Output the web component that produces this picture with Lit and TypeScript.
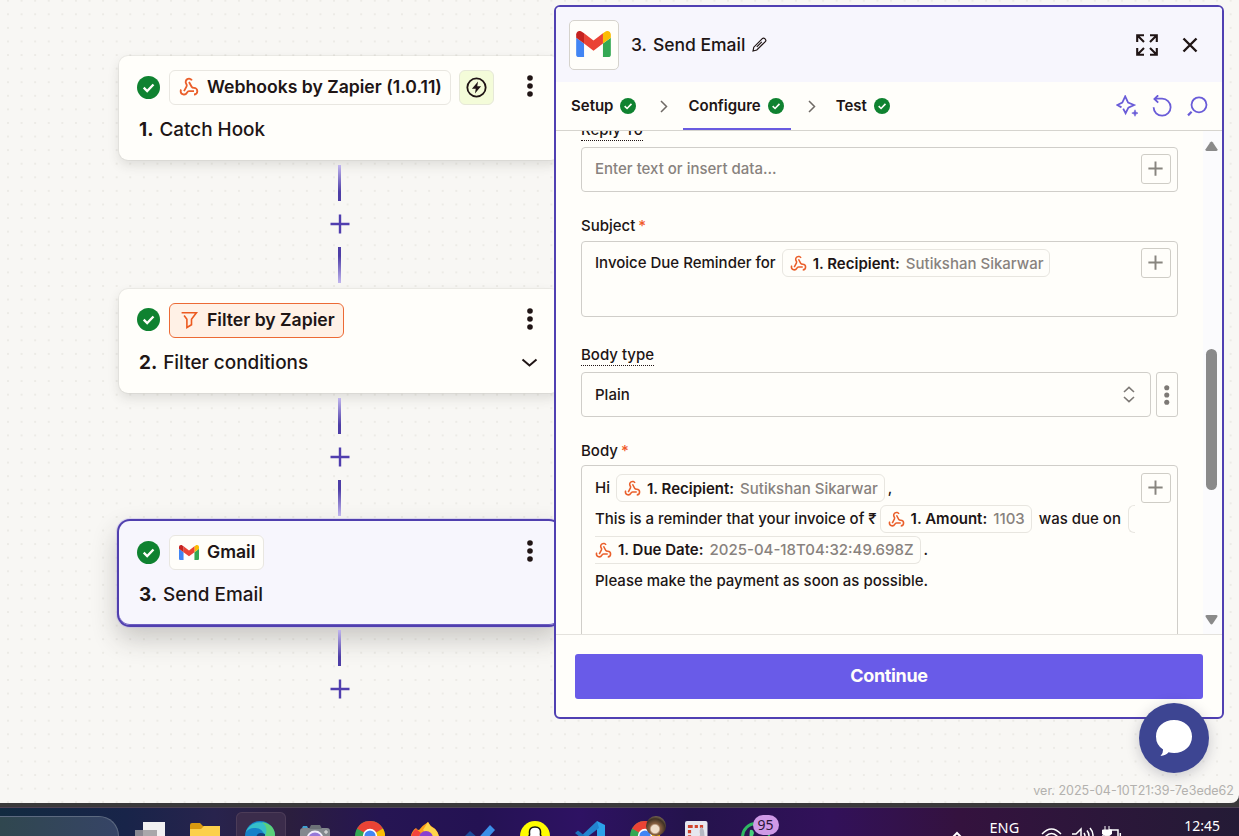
import { LitElement, html, css, svg } from "lit";
import { customElement, property } from "lit/decorators.js";

const hook = html`<svg class="hookicon" viewBox="0 0 24 24" fill="none" stroke="#ea5f2b" stroke-width="2.2" stroke-linecap="butt">
  <path d="M18 17h-6c-1.1 0-1.95.94-2.48 1.9A4 4 0 0 1 2 17c.01-.7.2-1.4.57-2" />
  <path d="m6 17 3.13-5.78c.53-.97.1-2.18-.5-3.1a4 4 0 1 1 6.89-4.06" />
  <path d="m12 6 3.13 5.73C15.66 12.7 16.9 13 18 13a4 4 0 0 1 0 8" />
</svg>`;

const gmail = html`<svg class="gmail" viewBox="52 42 88 66">
  <path fill="#4285f4" d="M58 108h14V74L52 59v43c0 3.32 2.69 6 6 6" />
  <path fill="#34a853" d="M120 108h14c3.32 0 6-2.69 6-6V59l-20 15" />
  <path fill="#fbbc04" d="M120 48v26l20-15v-8c0-7.42-8.47-11.65-14.4-7.2" />
  <path fill="#ea4335" d="M72 74V48l24 18 24-18v26L96 92" />
  <path fill="#c5221f" d="M52 51v8l20 15V48l-5.6-4.2c-5.94-4.45-14.4-.22-14.4 7.2" />
</svg>`;

const funnel = html`<svg class="funnel" viewBox="0 0 20 20" fill="none" stroke="#ec5a20" stroke-width="1.6">
  <path d="M2.600 2.800h14.800l-4.900 6.400v5.600l-4.600 2.700V9.200L5.100 5.600" />
</svg>`;

const check = html`<svg class="check" viewBox="0 0 24 24">
  <circle cx="12" cy="12" r="12" fill="#0f8230" />
  <path d="m7 12.2 3.6 3.5 6.6-6.9" fill="none" stroke="#fffefa" stroke-width="2.4" />
</svg>`;

const dots = html`<svg class="dots" viewBox="0 0 6 22">
  <circle cx="3" cy="3" r="2.8" /><circle cx="3" cy="11" r="2.8" /><circle cx="3" cy="19" r="2.8" />
</svg>`;

const plus = html`<svg class="plus" viewBox="0 0 20 20"><path d="M10 .5v19M.5 10h19" fill="none" stroke="currentColor" /></svg>`;

@customElement("step-card")
class StepCard extends LitElement {
  @property() kind = "";
  @property() app = "";
  @property() number = "";
  @property() name = "";

  static styles = css`
    :host { display: block; height: 104px; }
    .card {
      box-sizing: border-box; height: 104px; border-radius: 9px; padding: 14px 20px 0 18px;
      background: #fffefa; color: #201515;
      box-shadow: 0 0 0 1px rgba(60, 50, 40, 0.05), 0 5px 12px rgba(50, 45, 40, 0.13);
    }
    .card.email {
      background: #f7f6fd;
      box-shadow: 0 0 0 2px #503fae, 0 0 0 3px #b9b0ec66, inset 0 -1px 0 #6b5cc0, 0 12px 26px 2px rgba(50, 45, 40, 0.24);
      border-radius: 11px;
    }
    .head, .foot { display: flex; align-items: center; }
    .head { height: 35px; }
    .check { width: 23px; height: 23px; margin: -1px 9px 0 0; }
    .chip {
      box-sizing: border-box; display: flex; align-items: center; gap: 8px; height: 35px;
      padding: 0 8px 1px 9px; border: 1px solid #e9e7e1; border-radius: 6px; background: #fffefa;
      font: 600 17.6px/24px Inter, sans-serif; white-space: nowrap;
    }
    .filter .chip { background: #fff1e6; border-color: #ec6a35; }
    .hookicon, .funnel { width: 20px; height: 20px; }
    .gmail { width: 20px; height: 15px; }
    .instant {
      box-sizing: border-box; width: 35px; height: 35px; margin-left: 8px; display: grid; place-items: center;
      border-radius: 6px; border: 1px solid #e6e8d8; background: #f4fcd9;
    }
    .instant svg { width: 21px; height: 21px; }
    .dots { width: 6px; height: 22px; margin: -3px 7px 0 auto; fill: #201515; }
    .foot { margin: 12px 0 0 2px; height: 26px; font: 500 18.9px/26px Inter, sans-serif; }
    .foot b { font-weight: 700; margin-right: 6px; }
    .chev { width: 17px; height: 10px; margin-left: auto; margin-right: 2px; }
  `;

  render() {
    const icon = this.kind === "hook" ? hook : this.kind === "filter" ? funnel : gmail;
    return html`<div class="card ${this.kind}">
      <div class="head">
        ${check}
        <div class="chip">${icon}<span>${this.app}</span></div>
        ${this.kind === "hook"
          ? html`<div class="instant"><svg viewBox="0 0 22 22"><circle cx="11" cy="11" r="9.6" fill="none" stroke="#201515" stroke-width="1.9" /><path d="M12.600 4.600 6.200 12.200h4l-.8 5.200 6.400-7.600h-4z" fill="#201515" /></svg></div>`
          : ""}
        ${dots}
      </div>
      <div class="foot">
        <b>${this.number}</b><span>${this.name}</span>
        ${this.kind === "filter"
          ? html`<svg class="chev" viewBox="0 0 17 10"><path d="m1.500 1.500 7 6 7-6" fill="none" stroke="#201515" stroke-width="2" /></svg>`
          : ""}
      </div>
    </div>`;
  }
}

@customElement("data-pill")
class DataPill extends LitElement {
  @property() label = "";
  @property() value = "";
  @property({ type: Boolean, reflect: true }) wrapped = false;

  static styles = css`
    :host {
      box-sizing: border-box; display: inline-flex; align-items: center; height: 28px;
      padding: 1px 6px 0 7px; border: 1px solid #e8e6e0; border-radius: 6px;
      font: 500 15px/20px Inter, sans-serif; color: #88827e; white-space: nowrap;
    }
    :host([wrapped]) { border-left: 0; border-radius: 0 6px 6px 0; padding-left: 0; }
    .hookicon { width: 17px; height: 17px; margin-right: 6px; }
    b { font-weight: 600; color: #201515; margin-right: 6px; }
  `;

  render() {
    return html`${hook}<b>${this.label}</b><span>${this.value}</span>`;
  }
}

@customElement("editor-panel")
class EditorPanel extends LitElement {
  static styles = css`
    :host {
      box-sizing: border-box; display: flex; flex-direction: column; border: 2px solid #5040b2; border-radius: 6px;
      background: #fffefa; overflow: hidden; color: #201515; font: 500 15px/20px Inter, sans-serif;
    }
    header { height: 75px; flex: none; display: flex; align-items: center; background: #f7f6fd; padding: 0 24px 0 13px; }
    .logo {
      box-sizing: border-box; width: 50px; height: 50px; border: 1px solid #d6d3cd; border-radius: 5px;
      display: grid; place-items: center; background: #fffefa; margin-right: 12px;
    }
    .logo .gmail { width: 35px; height: 26px; margin: -2px 1px 0 0; }
    .title { font-size: 17.5px; line-height: 24px; white-space: pre; }
    .num { margin-right: 6px; }
    .pencil { width: 15px; height: 15px; margin-left: 7px; }
    .expand { width: 22px; height: 22px; margin-left: auto; margin-right: 24px; }
    .close { width: 16px; height: 16px; }
    nav { flex: none; height: 48px; display: flex; align-items: center; border-bottom: 1px solid #d6d4ce; padding-left: 10px; }
    .tab {
      box-sizing: border-box; height: 48px; display: flex; align-items: center; gap: 7px; padding: 2px 7px 0 5px;
      font-weight: 600; border-bottom: 2px solid transparent;
    }
    .tab.on { border-bottom-color: #695be0; }
    .tab .check { width: 16px; height: 16px; }
    .sep { box-sizing: border-box; width: 40px; padding-left: 2px; display: grid; place-items: center; }
    .sep svg { width: 8px; height: 13px; }
    .tools { margin-left: auto; display: flex; align-items: center; gap: 13px; padding-right: 14px; color: #6a5cd8; }
    .tools svg { width: 22px; height: 22px; }
    .scroll { flex: none; height: 503px; overflow: hidden; display: flex; justify-content: space-between; padding-left: 25px; }
    .form { width: 597px; margin-top: -11px; }
    .label { display: block; height: 20px; white-space: pre; }
    .label.hint { width: max-content; border-bottom: 1px dotted #201515; }
    .label i { font-style: normal; color: #f05a2a; margin-left: 3px; }
    .box {
      box-sizing: border-box; border: 1px solid #d0cec9; border-radius: 4px; display: flex;
      justify-content: space-between; padding: 6px 6px 0 13px;
    }
    .reply { height: 45px; margin: 6px 0 24px; }
    .subject { height: 76px; margin: 5px 0 28px; }
    .body { height: 200px; margin-top: 4px; padding-top: 7px; }
    .ph { color: #88827e; line-height: 30px; }
    .add {
      box-sizing: border-box; width: 30px; height: 30px; flex: none; border: 1px solid #cfcdc6; border-radius: 3px;
      display: grid; place-items: center; color: #88857f;
    }
    .add .plus { width: 15px; height: 15px; stroke-width: 2.6; margin: 0 1px 1px 0; }
    .row { display: flex; align-items: center; white-space: pre; height: 31px; }
    .subject .row { height: 30px; }
    .body .row:first-child { height: 30px; }
    .row data-pill { margin: 0 7px 0 6px; }
    .row .tight { margin-left: 3px; }
    .row .first { margin-left: 0; }
    .comma { margin-left: -4px; }
    .stub { box-sizing: border-box; width: 7px; height: 28px; border: 1px solid #e8e6e0; border-right: 0; border-radius: 6px 0 0 6px; margin-left: 7px; }
    .pick { display: flex; gap: 5px; margin: 6px 0 24px; }
    .select { width: 570px; height: 45px; padding: 0 15px 0 13px; align-items: center; }
    .select svg { width: 12px; height: 17px; }
    .more { box-sizing: border-box; width: 22px; height: 45px; border: 1px solid #d0cec9; border-radius: 3px; display: grid; place-items: center; }
    .more .dots { width: 5.500px; height: 20px; fill: #7d7975; }
    .bar {
      width: 18px; background: #fbfbfd; display: flex; flex-direction: column; align-items: center; padding: 10px 1px 8px 0; box-sizing: border-box; margin-right: 1px;
    }
    .bar svg { width: 13px; height: 11px; fill: #8a8a8a; }
    .thumb { width: 11px; height: 141px; border-radius: 6px; background: #8a8a8a; margin: 197px 0 124px; flex: none; }
    footer { flex: 1; border-top: 1px solid #e4e2dd; padding: 19px 19px 0; }
    .go {
      height: 45px; width: 100%; border: 0; border-radius: 3px; background: #695be8; color: #fffefa;
      font: 700 18px/24px Inter, sans-serif; letter-spacing: -0.35px; padding: 0 0 2px; display: block;
    }
  `;

  render() {
    const sep = html`<span class="sep"><svg viewBox="0 0 8 13"><path d="m1 1 5.500 5.500L1 12" fill="none" stroke="#6f6a66" stroke-width="1.5" /></svg></span>`;
    const add = html`<span class="add">${plus}</span>`;
    return html`
      <header>
        <span class="logo">${gmail}</span>
        <span class="title"><span class="num">3.</span>Send Email</span>
        <svg class="pencil" viewBox="0 0 15 15" fill="none" stroke="#201515" stroke-width="1.2">
          <path d="M1 14l.8-3.800L10.300 1.700c.7-.7 1.700-.8 2.500 0l.4.400c.8.800.8 1.800.1 2.500L4.800 13zM4.800 9.800l5-5" />
        </svg>
        <svg class="expand" viewBox="0 0 22 22" fill="none" stroke="#201515" stroke-width="2.1">
          <path d="M1.200 8V1.200H8M1.500 1.500 8 8M14 1.200h6.800V8M20.500 1.500 14 8M1.200 14v6.800H8M1.500 20.500 8 14M14 20.800h6.800V14M20.500 20.500 14 14" />
        </svg>
        <svg class="close" viewBox="0 0 16 16"><path d="m1.500 1.500 13 13m0-13-13 13" fill="none" stroke="#201515" stroke-width="2.4" /></svg>
      </header>
      <nav>
        <span class="tab">Setup${check}</span>${sep}
        <span class="tab on">Configure${check}</span>${sep}
        <span class="tab">Test${check}</span>
        <span class="tools">
          <svg viewBox="0 0 22 22" fill="none" stroke="currentColor" stroke-width="1.8">
            <path d="M5.500 12.400 1.300 10l5-2.400L9.200 1.400l2.900 6.200L18 10l-5.600 2.600-2.800 5.600-2.400-4.600" />
            <path d="M19 14.800l.9 2.400 2.100.9-2.100.9-.9 2.300-.9-2.300-2.300-.9 2.300-.9z" fill="currentColor" stroke-width=".6" />
          </svg>
          <svg viewBox="0 0 22 22" fill="none" stroke="currentColor" stroke-width="1.8">
            <path d="M2.600 12.300a8.500 8.500 0 1 0 8.400-8.600H3.400M7.200.3 3.400 3.900l3.800 3.700" />
          </svg>
          <svg viewBox="0 0 22 22" fill="none" stroke="currentColor" stroke-width="1.8">
            <circle cx="13" cy="9.800" r="7.500" /><path d="M5.600 16.800 2 20.400" stroke-width="2.2" />
          </svg>
        </span>
      </nav>
      <div class="scroll">
        <div class="form">
          <span class="label hint">Reply To</span>
          <div class="box reply"><span class="ph">Enter text or insert data...</span>${add}</div>
          <span class="label">Subject<i>*</i></span>
          <div class="box subject">
            <div class="row">Invoice Due Reminder for<data-pill label="1. Recipient:" value="Sutikshan Sikarwar"></data-pill></div>
            ${add}
          </div>
          <span class="label hint">Body type</span>
          <div class="pick">
            <div class="box select">
              <span>Plain</span>
              <svg viewBox="0 0 12 17" fill="none" stroke="#7d7975" stroke-width="1.6"><path d="m1 6 5-4.600L11 6M1 11l5 4.600 5-4.600" /></svg>
            </div>
            <span class="more">${dots}</span>
          </div>
          <span class="label">Body<i>*</i></span>
          <div class="box body">
            <div>
              <div class="row">Hi<data-pill label="1. Recipient:" value="Sutikshan Sikarwar"></data-pill><span class="comma">,</span></div>
              <div class="row">This is a reminder that your invoice of ₹<data-pill class="tight" label="1. Amount:" value="1103"></data-pill>was due on<span class="stub"></span></div>
              <div class="row"><data-pill class="first" wrapped label="1. Due Date:" value="2025-04-18T04:32:49.698Z"></data-pill><span class="comma">.</span></div>
              <div class="row">Please make the payment as soon as possible.</div>
            </div>
            ${add}
          </div>
        </div>
        <div class="bar">
          <svg viewBox="0 0 13 11"><path d="M5.300 1.200 .6 8.200Q0 10 1.600 10h9.800Q13 10 12.400 8.200L7.700 1.200Q6.500 0 5.300 1.200" /></svg>
          <div class="thumb"></div>
          <svg viewBox="0 0 13 11"><path d="M5.300 9.800.6 2.800Q0 1 1.600 1h9.800Q13 1 12.400 2.800L7.700 9.800Q6.500 11 5.300 9.800" /></svg>
        </div>
      </div>
      <footer><button class="go">Continue</button></footer>
    `;
  }
}

const chrome = svg`
  <circle cx="15" cy="15" r="15" fill="#34a853" />
  <path d="M15 15 2 7.500A15 15 0 0 1 28 7.500z" fill="#ea4335" />
  <path d="M15 15 28 7.500A15 15 0 0 1 15 30z" fill="#fbbc05" />
  <circle cx="15" cy="15" r="7.200" fill="#fff" /><circle cx="15" cy="15" r="5.600" fill="#4285f4" />`;

const tasks = [
  svg`<path d="M8 1h22v24H8z" fill="#f1f0f1" /><path d="M0 9h22v20H0z" fill="#9c9a9d" opacity=".85" />`,
  svg`<path d="M0 4q0-2 2-2h8l3 3h17v24H0z" fill="#d99a10" /><path d="M0 8h11l3-3h16v24H0z" fill="#fcd04b" />`,
  svg`<circle cx="15" cy="15" r="15" fill="#1581c9" /><path d="M1 11A15 15 0 0 1 30 15q0 5-7 5-4-1-3-5Q17 6 9 7 4 7 1 11z" fill="#36bfc9" /><path d="M17 1Q30 3 30 15q0 5-7 5-4-1-3-5 4-8-3-14z" fill="#5bd07a" /><path d="M11 17q1-7 9-4v17H12z" fill="#12407c" />`,
  svg`<rect y="7" width="30" height="24" rx="3" fill="#83888e" /><path d="M9 8l2-4h9l2 4z" fill="#6c7177" /><path d="M2 7l1-2h4l1 2z" fill="#3f9fd0" /><circle cx="15" cy="18" r="8.500" fill="#f2eefb" /><circle cx="15" cy="18" r="6.600" fill="#9678d8" /><path d="M26 9v4M24 11h4" stroke="#e7e7e7" />`,
  chrome,
  svg`<path d="M1 20Q0 11 6 7q1 2 3 2 4-5 9-8 2 4 6 6 6 5 5 13v10H2z" fill="#ffa11c" /><path d="M18 1q2 5 7 7 5 5 4 14l-9-6-7-7z" fill="#ffd54a" /><path d="M1 20Q1 11 6 8l5 4q-3 3-2 9z" fill="#f4433c" /><circle cx="16" cy="17" r="7" fill="#8a3fd0" />`,
  svg`<path d="m0 15 5-5 8 7L9 28z" fill="#1c4e9c" /><path d="M8 23 25 4l5 5-18 20z" fill="#3b8ee8" />`,
  svg`<circle cx="15" cy="15" r="15" fill="#fffc00" /><path d="M8 16q2-1 1.500-4Q9 6 15 6t5.500 6Q20 15 22 16l3 3-4 9H9l-4-9z" fill="#fff" stroke="#111" stroke-width="1.500" />`,
  svg`<path d="M22 0 30 4v26L22 24z" fill="#2ba2ea" /><path d="M22 0 4 17l3 3L24 7z" fill="#2384cf" /><path d="m0 12 3-2.500L24 26l-2 4z" fill="#1c74bd" />`,
  chrome,
  svg`<rect width="22.500" height="30" rx="2" fill="#e6e7ef" /><path d="M4.500 5.500h12v20h-12z" fill="none" stroke="#d1432c" stroke-width="3.200" stroke-dasharray="3.200 2" /><path d="M16 6q5 1 3 20h-4V8z" fill="#b6b8c3" />`,
  svg`<circle cx="16" cy="16" r="13.500" fill="none" stroke="#2fb862" stroke-width="3" /><path d="M10 9q3-1 4 3l-1 3 4 4-3 5q-6-5-4-15z" fill="#48d07c" />`,
];

@customElement("task-bar")
class TaskBar extends LitElement {
  static styles = css`
    :host {
      display: flex; height: 28px; overflow: hidden; color: #fff; font: 400 14px/18px "Noto Sans", sans-serif;
      border-top: 1px solid #4e4355;
      background: linear-gradient(90deg, #122a40 0, #182449 125px, #28234d 215px, #2b1e3e 290px, #261553 380px, #241253 480px, #2e1263 580px, #24134c 690px, #32115a 830px, #34123e 960px, #241b36 1239px);
    }
    .search { box-sizing: border-box; width: 119px; height: 40px; margin-top: 8px; flex: none; border: 1px solid #5d6a80; border-left: 0; border-bottom: 0; border-radius: 0 20px 0 0; background: linear-gradient(90deg, #30474f, #364466); }
    .apps { display: grid; grid-template-columns: repeat(12, 55px); margin-left: 3.500px; flex: none; }
    .app { height: 40px; box-sizing: border-box; padding: 13px 12.500px 0; position: relative; }
    .app.on { background: #3b2c4b; border-radius: 6px 6px 0 0; height: 36px; margin: 4px 2px 0 3px; padding: 9px 9.500px 0; box-shadow: inset 0 0 0 1px #4c3c58; }
    .app svg { display: block; width: 30px; height: 30px; }
    .face { position: absolute; left: 28px; top: 8px; width: 20px; height: 20px; border-radius: 50%; background: radial-gradient(circle at 45% 65%, #f1ddcb 0 22%, #8a6042 32%, #403124 60%, #97866a 85%); }
    .badge { position: absolute; left: 25px; top: 7px; width: 26px; height: 20px; border-radius: 10px; background: #cf9ae6; color: #2a1636; text-align: center; font-size: 14px; line-height: 20px; }
    .tray { margin-left: auto; display: flex; align-items: flex-start; padding-right: 19px; }
    .up { width: 12px; height: 8px; margin: 23px 27px 0 0; }
    .lang { margin: 10px 22px 0 0; font-size: 14.500px; }
    .status { width: 81px; height: 16px; margin: 18px 62px 0 0; }
    .time { margin-top: 9px; }
  `;

  render() {
    return html`
      <div class="search"></div>
      <div class="apps">
        ${tasks.map(
          (art, i) => html`<div class="app ${i === 2 ? "on" : ""}">
            <svg viewBox="0 0 30 30">${art}</svg>
            ${i === 9 ? html`<span class="face"></span>` : ""}${i === 11 ? html`<span class="badge">95</span>` : ""}
          </div>`
        )}
      </div>
      <div class="tray">
        <svg class="up" viewBox="0 0 12 8"><path d="m1 7 5-5 5 5" fill="none" stroke="#fff" stroke-width="2" /></svg>
        <span class="lang">ENG</span>
        <svg class="status" viewBox="0 0 81 16" fill="none" stroke="#fff" stroke-width="1.500">
          <path d="M1 8q9.500-10 19 0M4 11q6.500-7 13 0M7.500 14q3-4 6 0" />
          <path d="M31 8h4l5-5v13M43 7q2 3 0 7M46 4.500q4 5 0 11M49 2q6 7 0 14" />
          <path d="M68 4h9v12M79.300 7v6M62 9v7h4" /><path d="M64 0v4M68 0v4M61.500 4h9v4q-4.500 4-9 0z" fill="#fff" stroke-width="1" />
        </svg>
        <span class="time">12:45</span>
      </div>
    `;
  }
}

@customElement("app-root")
class AppRoot extends LitElement {
  static styles = css`
    :host { display: block; width: 1239px; height: 836px; overflow: hidden; background: #3a393a; }
    .window { position: relative; height: 803px; background: #f8f7f4; border-radius: 0 0 8px 0; overflow: hidden; }
    .grid { position: absolute; inset: 0; width: 1239px; height: 803px; }
    .flow { position: relative; width: 441px; padding: 56px 0 0 119px; }
    .link { display: flex; flex-direction: column; align-items: center; height: 123.500px; padding-top: 5px; color: #503eae; }
    .line { width: 3px; height: 36px; background: linear-gradient(#c0b5ee, #4d3da6 75%); }
    .line.up { background: linear-gradient(#4d3da6 25%, #c0b5ee); }
    .spot { width: 28px; height: 28px; margin: 9px 0; border-radius: 50%; background: #f8f7f4; display: grid; place-items: center; }
    .plus { width: 20px; height: 20px; stroke-width: 2.400; }
    editor-panel { position: absolute; left: 554px; top: 5px; width: 670px; height: 714px; }
    .version { position: absolute; right: 5px; bottom: 3px; font: 400 12.500px/18px Inter, sans-serif; color: #b3b1ae; }
    .chat {
      position: absolute; left: 1139px; top: 703px; width: 70px; height: 70px; border-radius: 50%; background: #3d4592;
      box-shadow: 0 3px 14px rgba(30, 30, 60, 0.22);
    }
    .chat svg { display: block; width: 70px; height: 70px; }
    .edge { height: 4px; }
  `;

  render() {
    const link = (last = false) => html`<div class="link">
      <span class="line"></span><span class="spot">${plus}</span>${last ? "" : html`<span class="line up"></span>`}
    </div>`;
    return html`
      <div class="window">
        <svg class="grid">
          <defs>
            <pattern id="dot" x="1.200" y="-6.100" width="13.585" height="13.585" patternUnits="userSpaceOnUse">
              <circle cx="6.800" cy="6.800" r=".8" fill="#dcdad4" />
            </pattern>
          </defs>
          <rect width="1239" height="803" fill="url(#dot)" />
        </svg>
        <div class="flow">
          <step-card kind="hook" app="Webhooks by Zapier (1.0.11)" number="1." name="Catch Hook"></step-card>
          ${link()}
          <step-card kind="filter" app="Filter by Zapier" number="2." name="Filter conditions"></step-card>
          ${link()}
          <step-card kind="email" app="Gmail" number="3." name="Send Email"></step-card>
          ${link(true)}
        </div>
        <editor-panel></editor-panel>
        <span class="version">ver. 2025-04-10T21:39-7e3ede62</span>
        <div class="chat">
          <svg viewBox="0 0 70 70"><path d="M35 17c10.500 0 18 7 18 16.500S45.500 50 35 50q-3 0-5.500-.7Q27 52.500 21.500 53q2.800-3 2.600-6.500Q17 42 17 33.500C17 24 24.500 17 35 17z" fill="#fff" /></svg>
        </div>
      </div>
      <div class="edge"></div>
      <task-bar></task-bar>
    `;
  }
}
